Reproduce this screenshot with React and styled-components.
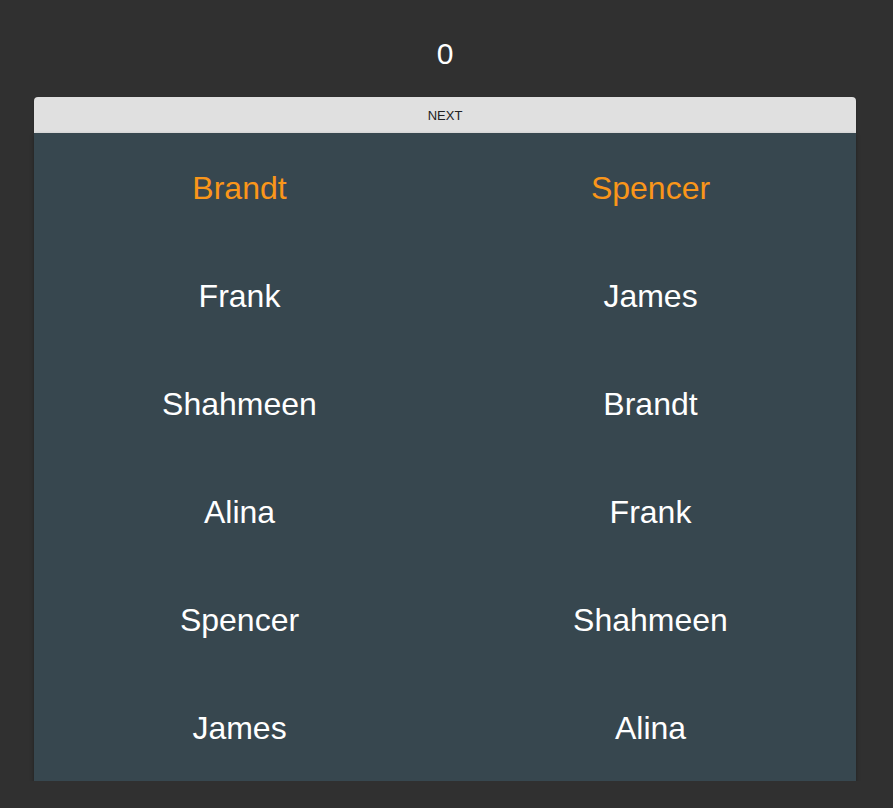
import React, { useState } from "react";
import styled, { createGlobalStyle } from "styled-components";

const GlobalStyle = createGlobalStyle`
  html, body {
    margin: 0;
    background: #303030;
    font-family: "Liberation Sans", Arial, sans-serif;
  }
`;

const Page = styled.div`
  padding: 0 37px 0 34px;
  display: flex;
  flex-direction: column;
`;

const Counter = styled.div`
  height: 97px;
  display: flex;
  align-items: center;
  justify-content: center;
  color: #fff;
  font-size: 30px;
  padding-top: 10px;
  box-sizing: border-box;
`;

const NextButton = styled.button`
  height: 36px;
  border: none;
  border-radius: 4px 4px 0 0;
  background: #e0e0e0;
  color: #222;
  font-family: inherit;
  font-size: 13px;
  text-transform: uppercase;
  cursor: pointer;
  box-shadow: 0 1px 2px rgba(0, 0, 0, 0.3);
`;

const Board = styled.div`
  display: grid;
  grid-template-columns: 1fr 1fr;
  grid-auto-rows: 108px;
  background: #37474f;
  box-shadow: 0 2px 4px rgba(0, 0, 0, 0.35);
`;

const Cell = styled.div`
  display: flex;
  align-items: center;
  justify-content: center;
  padding-top: 2px;
  box-sizing: border-box;
  font-size: 32px;
  color: ${({ $active }) => ($active ? "#fa961a" : "#fff")};
`;

const left = ["Brandt", "Frank", "Shahmeen", "Alina", "Spencer", "James"];
const right = ["Spencer", "James", "Brandt", "Frank", "Shahmeen", "Alina"];

export default function App() {
  const [count, setCount] = useState(0);

  return (
    <>
      <GlobalStyle />
      <Page>
        <Counter>{count}</Counter>
        <NextButton onClick={() => setCount(count + 1)}>Next</NextButton>
        <Board>
          {left.map((name, i) => (
            <React.Fragment key={i}>
              <Cell $active={i === 0}>{name}</Cell>
              <Cell $active={i === 0}>{right[i]}</Cell>
            </React.Fragment>
          ))}
        </Board>
      </Page>
    </>
  );
}
